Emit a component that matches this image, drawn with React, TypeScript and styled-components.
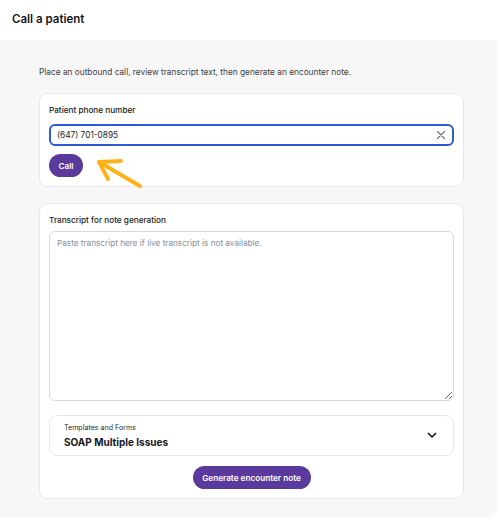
import React, { useState } from 'react';
import styled, { createGlobalStyle } from 'styled-components';

const GlobalStyle = createGlobalStyle`
  * { box-sizing: border-box; }
  body {
    margin: 0;
    background: #ffffff;
    font-family: Inter, "Noto Sans", sans-serif;
    color: #1d1d22;
  }
`;

const Header = styled.header`
  height: 40px;
  display: flex;
  align-items: center;
  padding: 0 12px 2px;
  background: #ffffff;
`;

const PageTitle = styled.h1`
  margin: 0;
  font-size: 11.5px;
  font-weight: 600;
  color: #16161a;
`;

const Panel = styled.main`
  width: 497px;
  height: 477px;
  background: #f7f7f8;
  border-bottom-right-radius: 10px;
  padding: 24px 33px 0 39px;
  display: flex;
  flex-direction: column;
`;

const Intro = styled.p`
  margin: 0 0 13px;
  font-size: 8.3px;
  line-height: 16px;
  color: #3f3f47;
`;

const Card = styled.section<{ $gap?: number }>`
  position: relative;
  background: #ffffff;
  border: 1px solid #e6e7ee;
  border-radius: 9px;
  padding: 8px 9px 9px;
  display: flex;
  flex-direction: column;
  margin-bottom: ${(p) => p.$gap ?? 0}px;
`;

const Label = styled.label<{ $space: number }>`
  font-size: 8.2px;
  font-weight: 500;
  line-height: 16px;
  color: #1a1a20;
  margin-bottom: ${(p) => p.$space}px;
`;

const InputWrap = styled.div`
  position: relative;
  height: 22px;
  border: 2px solid #2c5bd6;
  border-radius: 6px;
  display: flex;
  align-items: center;
  padding: 0 6px;
`;

const PhoneInput = styled.input`
  flex: 1;
  border: none;
  outline: none;
  padding: 0;
  font-family: inherit;
  font-size: 8.3px;
  color: #1a1a1f;
  background: transparent;
`;

const ClearButton = styled.button`
  border: none;
  background: none;
  padding: 0;
  display: flex;
  color: #6e6e76;
  cursor: pointer;
`;

const PillButton = styled.button<{ $center?: boolean }>`
  align-self: ${(p) => (p.$center ? 'center' : 'flex-start')};
  height: 23px;
  padding: 0 10px;
  border: none;
  border-radius: 12px;
  background: #5b3a9d;
  color: #ffffff;
  font-family: inherit;
  font-size: 8.2px;
  font-weight: 600;
  white-space: nowrap;
  cursor: pointer;
`;

const CallButton = styled(PillButton)`
  margin-top: 8px;
  width: 34px;
  padding: 0;
`;

const Arrow = styled.svg`
  position: absolute;
  left: 55px;
  top: 61px;
  overflow: visible;
`;

const Transcript = styled.textarea`
  height: 170px;
  resize: vertical;
  border: 1px solid #d6d9e4;
  border-radius: 6px;
  padding: 6px 7px;
  font-family: inherit;
  font-size: 8.2px;
  color: #1a1a1f;
  outline: none;
  &::placeholder { color: #8b8d97; }
`;

const TemplateBox = styled.div`
  margin-top: 14px;
  height: 41px;
  border: 1px solid #e6e7ee;
  border-radius: 8px;
  padding: 0 16px 0 14px;
  display: flex;
  align-items: center;
  justify-content: space-between;
`;

const TemplateText = styled.div`
  display: flex;
  flex-direction: column;
  gap: 4px;
`;

const TemplateCaption = styled.span`
  font-size: 7.1px;
  line-height: 9px;
  color: #2a2a30;
`;

const TemplateValue = styled.span`
  font-size: 10px;
  line-height: 12px;
  font-weight: 700;
  color: #16161a;
`;

const GenerateButton = styled(PillButton)`
  margin-top: 10px;
  width: 118px;
  padding: 0;
`;

export default function App() {
  const [phone, setPhone] = useState('(647) 701-0895');
  const [transcript, setTranscript] = useState('');

  return (
    <>
      <GlobalStyle />
      <Header>
        <PageTitle>Call a patient</PageTitle>
      </Header>
      <Panel>
        <Intro>Place an outbound call, review transcript text, then generate an encounter note.</Intro>

        <Card $gap={16}>
          <Label $space={6}>Patient phone number</Label>
          <InputWrap>
            <PhoneInput value={phone} onChange={(e) => setPhone(e.target.value)} />
            <ClearButton onClick={() => setPhone('')} aria-label="Clear">
              <svg width="10" height="10" viewBox="0 0 10 10" fill="none" stroke="currentColor" strokeWidth="1.1" strokeLinecap="round">
                <path d="M1.5 1.5l7 7M8.5 1.5l-7 7" />
              </svg>
            </ClearButton>
          </InputWrap>
          <CallButton>Call</CallButton>
          <Arrow width="50" height="36" viewBox="0 0 50 36" fill="none" stroke="#ffb116" strokeWidth="3.8" strokeLinecap="round" strokeLinejoin="round">
            <path d="M45 31L4 7" />
            <path d="M4 7L26 6" />
            <path d="M4 7L13 24" />
          </Arrow>
        </Card>

        <Card>
          <Label $space={3}>Transcript for note generation</Label>
          <Transcript
            value={transcript}
            onChange={(e) => setTranscript(e.target.value)}
            placeholder="Paste transcript here if live transcript is not available."
          />
          <TemplateBox>
            <TemplateText>
              <TemplateCaption>Templates and Forms</TemplateCaption>
              <TemplateValue>SOAP Multiple Issues</TemplateValue>
            </TemplateText>
            <svg width="10" height="7" viewBox="0 0 10 7" fill="none" stroke="#1a1a1f" strokeWidth="1.7" strokeLinecap="round" strokeLinejoin="round">
              <path d="M1.5 1.5l3.5 3.5 3.5-3.5" />
            </svg>
          </TemplateBox>
          <GenerateButton $center>Generate encounter note</GenerateButton>
        </Card>
      </Panel>
    </>
  );
}
